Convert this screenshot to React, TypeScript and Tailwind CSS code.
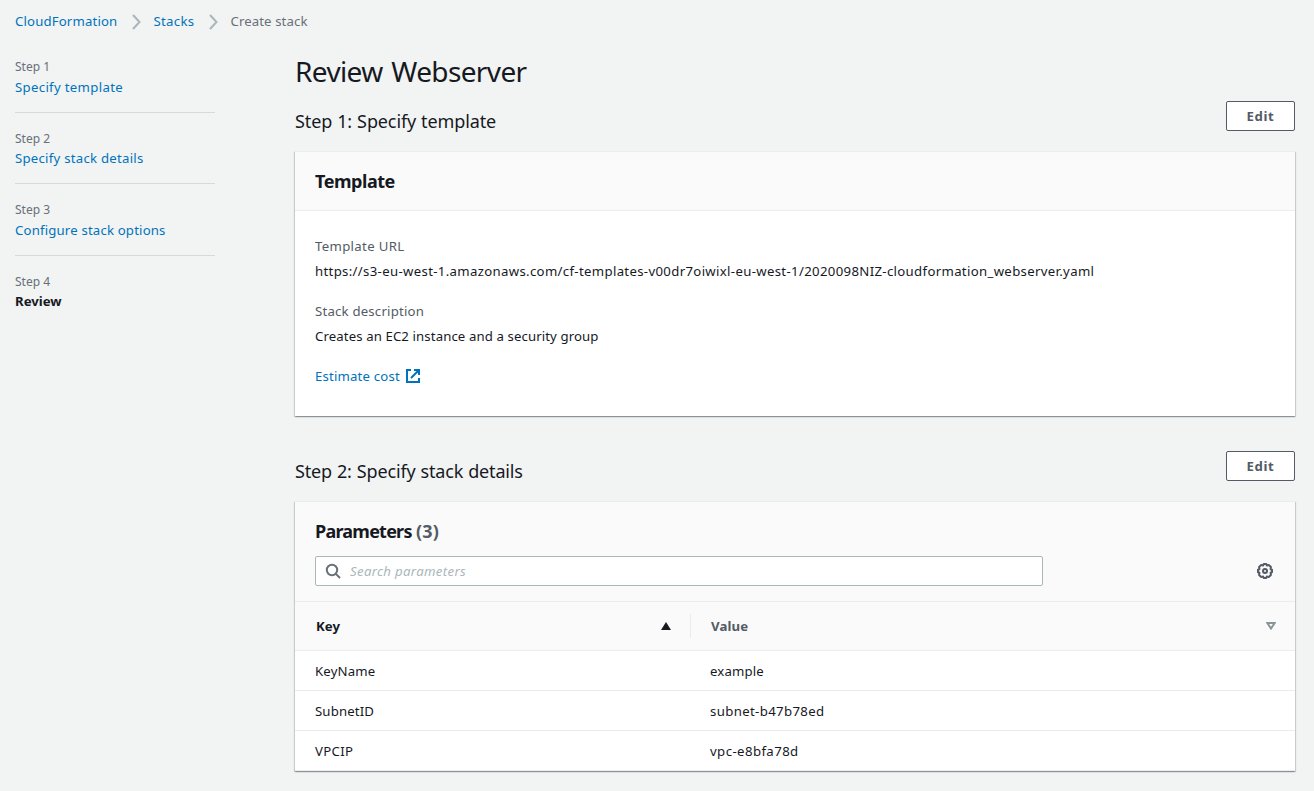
import React from "react";

const cardShadow = "bg-white border-t border-[#eaeded] shadow-[0_1px_1px_0_rgba(0,28,36,0.22),1px_1px_1px_0_rgba(0,28,36,0.15),-1px_1px_1px_0_rgba(0,28,36,0.15)]";

function Chevron() {
  return (
    <svg className="mr-[13px] ml-[14px] h-4 w-[9px] text-[#aab7b8]" viewBox="0 0 9 16" fill="none" stroke="currentColor" strokeWidth="2">
      <path d="M1 1L7.5 8L1 15" />
    </svg>
  );
}

type StepProps = { n: number; label: string; labelClass: string; last?: boolean };

function Step({ n, label, labelClass, last }: StepProps) {
  return (
    <li className={last ? "h-[50px]" : "mb-[16px] h-[55.5px] border-b border-[#d5dbdb]"}>
      <div className="text-[12px] leading-5 text-[#687078]">Step {n}</div>
      <div className={`leading-5 ${labelClass}`}>{label}</div>
    </li>
  );
}

function SectionHeader({ title, titleClass }: { title: string; titleClass: string }) {
  return (
    <div className="flex h-[30px] items-start justify-between">
      <h2 className={`pt-[6px] text-[18px] leading-[28px] ${titleClass}`}>{title}</h2>
      <button className="h-[30px] w-[69px] rounded-[2px] border border-[#545b64] bg-white pt-px text-[13.2px] font-bold tracking-[0.6px] text-[#545b64]">Edit</button>
    </div>
  );
}

const rows = [
  { k: "KeyName", v: "example", kc: "tracking-[0.15px]", vc: "tracking-[0.14px]" },
  { k: "SubnetID", v: "subnet-b47b78ed", kc: "tracking-[0.13px]", vc: "tracking-[0.36px]" },
  { k: "VPCIP", v: "vpc-e8bfa78d", kc: "tracking-[0.3px]", vc: "tracking-[0.42px]" },
];

export default function App() {
  return (
    <div className="h-[791px] overflow-hidden bg-[#f2f3f3] font-['Noto_Sans',sans-serif] text-[13.2px] text-[#16191f]">
      <nav className="flex h-[42px] items-center pt-px pl-[15px] text-[#0073bb]">
        <span className="w-[102.5px] tracking-[0.15px]">CloudFormation</span>
        <Chevron />
        <span className="w-[41px] tracking-[0.3px]">Stacks</span>
        <Chevron />
        <span className="tracking-[0.1px] text-[#687078]">Create stack</span>
      </nav>
      <div className="flex">
        <ul className="ml-[15px] w-[200px] shrink-0 pt-[15px]">
          <Step n={1} label="Specify template" labelClass="text-[#0073bb] tracking-[0.32px]" />
          <Step n={2} label="Specify stack details" labelClass="-mt-px text-[#0073bb] tracking-[0.25px]" />
          <Step n={3} label="Configure stack options" labelClass="text-[#0073bb] tracking-[0.17px]" />
          <Step n={4} label="Review" labelClass="-mt-px font-bold" last />
        </ul>
        <main className="ml-[80px] w-[1000px]">
          <h1 className="h-[59px] pt-[11px] text-[28px] leading-[36px] tracking-[-0.62px] [word-spacing:2px]">Review Webserver</h1>
          <SectionHeader title="Step 1: Specify template" titleClass="tracking-[-0.12px] [word-spacing:0.5px]" />
          <section className={`mt-5 h-[265px] ${cardShadow}`}>
            <div className="flex h-[59px] items-center border-b border-[#eaeded] bg-[#fafafa] px-5 text-[18px] font-bold tracking-[-0.45px]">Template</div>
            <div className="px-5 pt-[25px] leading-5">
              <div className="tracking-[0.33px] text-[#545b64]">Template URL</div>
              <div className="mt-[5px] tracking-[0.332px] whitespace-nowrap">https://s3-eu-west-1.amazonaws.com/cf-templates-v00dr7oiwixl-eu-west-1/2020098NIZ-cloudformation_webserver.yaml</div>
              <div className="mt-5 tracking-[0.2px] text-[#545b64]">Stack description</div>
              <div className="mt-[5px] tracking-[0.11px]">Creates an EC2 instance and a security group</div>
              <div className="mt-5 flex items-center text-[#0073bb]">
                <span className="w-[90px] tracking-[0.18px]">Estimate cost</span>
                <svg className="size-4" viewBox="0 0 16 16" fill="none" stroke="currentColor" strokeWidth="2">
                  <path d="M6 2H2v12h12v-4M9 2h5v5M6 10l8-8" />
                </svg>
              </div>
            </div>
          </section>
          <div className="h-[35px]" />
          <SectionHeader title="Step 2: Specify stack details" titleClass="tracking-[-0.16px] [word-spacing:0.5px]" />
          <section className={`mt-5 h-[270px] ${cardShadow}`}>
            <div className="h-[100px] border-b border-[#eaeded] bg-[#fafafa] px-5 pt-[15px]">
              <h3 className="flex text-[18px] leading-[28px] font-bold">
                <span className="w-[101px] tracking-[-0.77px]">Parameters</span>
                <span className="tracking-[0.2px] text-[#545b64]">(3)</span>
              </h3>
              <div className="mt-[11px] flex items-center justify-between">
                <div className="flex h-[30px] w-[728px] items-center rounded-[2px] border border-[#aab7b8] bg-white pl-[9px] text-[#aab7b8] italic">
                  <svg className="mr-[9px] size-4 text-[#687078]" viewBox="0 0 16 16" fill="none" stroke="currentColor" strokeWidth="2">
                    <circle cx="7" cy="7" r="5.2" />
                    <path d="M10.6 10.6L15 15" />
                  </svg>
                  <span className="pt-px tracking-[0.33px]">Search parameters</span>
                </div>
                <svg className="mr-[2px] size-4 text-[#545b64]" viewBox="0 0 16 16" fill="none" stroke="currentColor" strokeWidth="2" strokeLinejoin="round">
                  <path d="M6.7 1h2.6l.5 1.4 2.2-.3L13.9 4l-.3 2.2 1.4.5v2.6l-1.4.5.3 2.2-1.9 1.9-2.2-.3L9.3 15H6.7l-.5-1.4-2.2.3L2.1 12l.3-2.2L1 9.3V6.7l1.4-.5L2.1 4 4 2.1l2.2.3z" />
                  <circle cx="8" cy="8" r="2" />
                </svg>
              </div>
            </div>
            <div className="flex h-[49px] items-center border-b border-[#eaeded] bg-[#fafafa] font-bold">
              <div className="flex h-6 w-[396px] items-center justify-between border-r border-[#eaeded] pr-[19px] pl-[21px]">
                <span className="pt-px tracking-[0.1px]">Key</span>
                <svg className="h-2 w-[10px]" viewBox="0 0 10 8"><path d="M0 8L5 0l5 8z" fill="#16191f" /></svg>
              </div>
              <div className="flex flex-1 items-center justify-between pr-[19px] pl-5 text-[#545b64]">
                <span className="pt-px tracking-[0.15px]">Value</span>
                <svg className="h-2 w-[10px]" viewBox="0 0 10 8"><path d="M1.3 1h7.4L5 6.5z" fill="none" stroke="#879596" strokeWidth="2" /></svg>
              </div>
            </div>
            {rows.map(({ k, v, kc, vc }) => (
              <div key={k} className="flex h-10 items-center border-b border-[#eaeded] pt-[2px]">
                <span className={`w-[395px] pl-5 ${kc}`}>{k}</span>
                <span className={`pl-5 ${vc}`}>{v}</span>
              </div>
            ))}
          </section>
        </main>
      </div>
    </div>
  );
}
